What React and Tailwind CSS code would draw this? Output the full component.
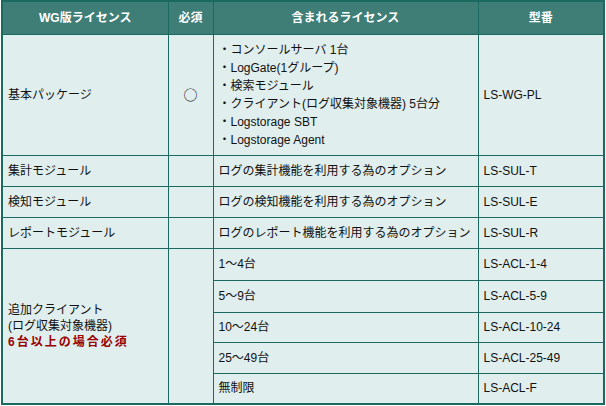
import React from "react";

const font = { fontFamily: '"Liberation Sans", "Noto Sans CJK JP", sans-serif' };

export default function App() {
  const td = "border border-[#1b6a62] bg-[#e0eeee] px-[5px] align-middle";
  const th = "border border-[#1b6a62] bg-[#3e7e77] text-white font-bold text-center align-middle";
  const clients = [
    ["1〜4台", "LS-ACL-1-4", "h-[32px]"],
    ["5〜9台", "LS-ACL-5-9", "h-[32px]"],
    ["10〜24台", "LS-ACL-10-24", "h-[30px]"],
    ["25〜49台", "LS-ACL-25-49", "h-[31px]"],
    ["無制限", "LS-ACL-F", "h-[31px]"],
  ];
  return (
    <div className="w-[606px] h-[406px] bg-white pl-[1px]" style={font}>
      <table className="table-fixed border-collapse w-[602px] text-[12px] leading-[16px] text-[#111] border-2 border-[#1b6a62]">
        <colgroup>
          <col className="w-[166px]" />
          <col className="w-[45px]" />
          <col className="w-[265px]" />
          <col className="w-[126px]" />
        </colgroup>
        <thead>
          <tr className="h-[33px]">
            <th className={th}>WG版ライセンス</th>
            <th className={th}>必須</th>
            <th className={th}>含まれるライセンス</th>
            <th className={th}>型番</th>
          </tr>
        </thead>
        <tbody>
          <tr className="h-[121px]">
            <td className={td}>基本パッケージ</td>
            <td className={td + " text-center"}>
              <span className="text-[14px] font-['Noto_Sans_CJK_JP',sans-serif]">○</span>
            </td>
            <td className={td + " leading-[18px]"}>
              <div>・コンソールサーバ 1台</div>
              <div>・LogGate(1グループ)</div>
              <div>・検索モジュール</div>
              <div>・クライアント(ログ収集対象機器) 5台分</div>
              <div>・Logstorage SBT</div>
              <div>・Logstorage Agent</div>
            </td>
            <td className={td}>LS-WG-PL</td>
          </tr>
          <tr className="h-[31px]">
            <td className={td}>集計モジュール</td>
            <td className={td}></td>
            <td className={td}>ログの集計機能を利用する為のオプション</td>
            <td className={td}>LS-SUL-T</td>
          </tr>
          <tr className="h-[31px]">
            <td className={td}>検知モジュール</td>
            <td className={td}></td>
            <td className={td}>ログの検知機能を利用する為のオプション</td>
            <td className={td}>LS-SUL-E</td>
          </tr>
          <tr className="h-[31px]">
            <td className={td}>レポートモジュール</td>
            <td className={td}></td>
            <td className={td}>ログのレポート機能を利用する為のオプション</td>
            <td className={td}>LS-SUL-R</td>
          </tr>
          {clients.map(([a, b, h], i) => (
            <tr key={b} className={h}>
              {i === 0 && (
                <>
                  <td className={td} rowSpan={5}>
                    <div>追加クライアント</div>
                    <div>(ログ収集対象機器)</div>
                    <div className="font-bold text-[#990000] tracking-[2px]">6台以上の場合必須</div>
                  </td>
                  <td className={td} rowSpan={5}></td>
                </>
              )}
              <td className={td}>{a}</td>
              <td className={td}>{b}</td>
            </tr>
          ))}
        </tbody>
      </table>
    </div>
  );
}
